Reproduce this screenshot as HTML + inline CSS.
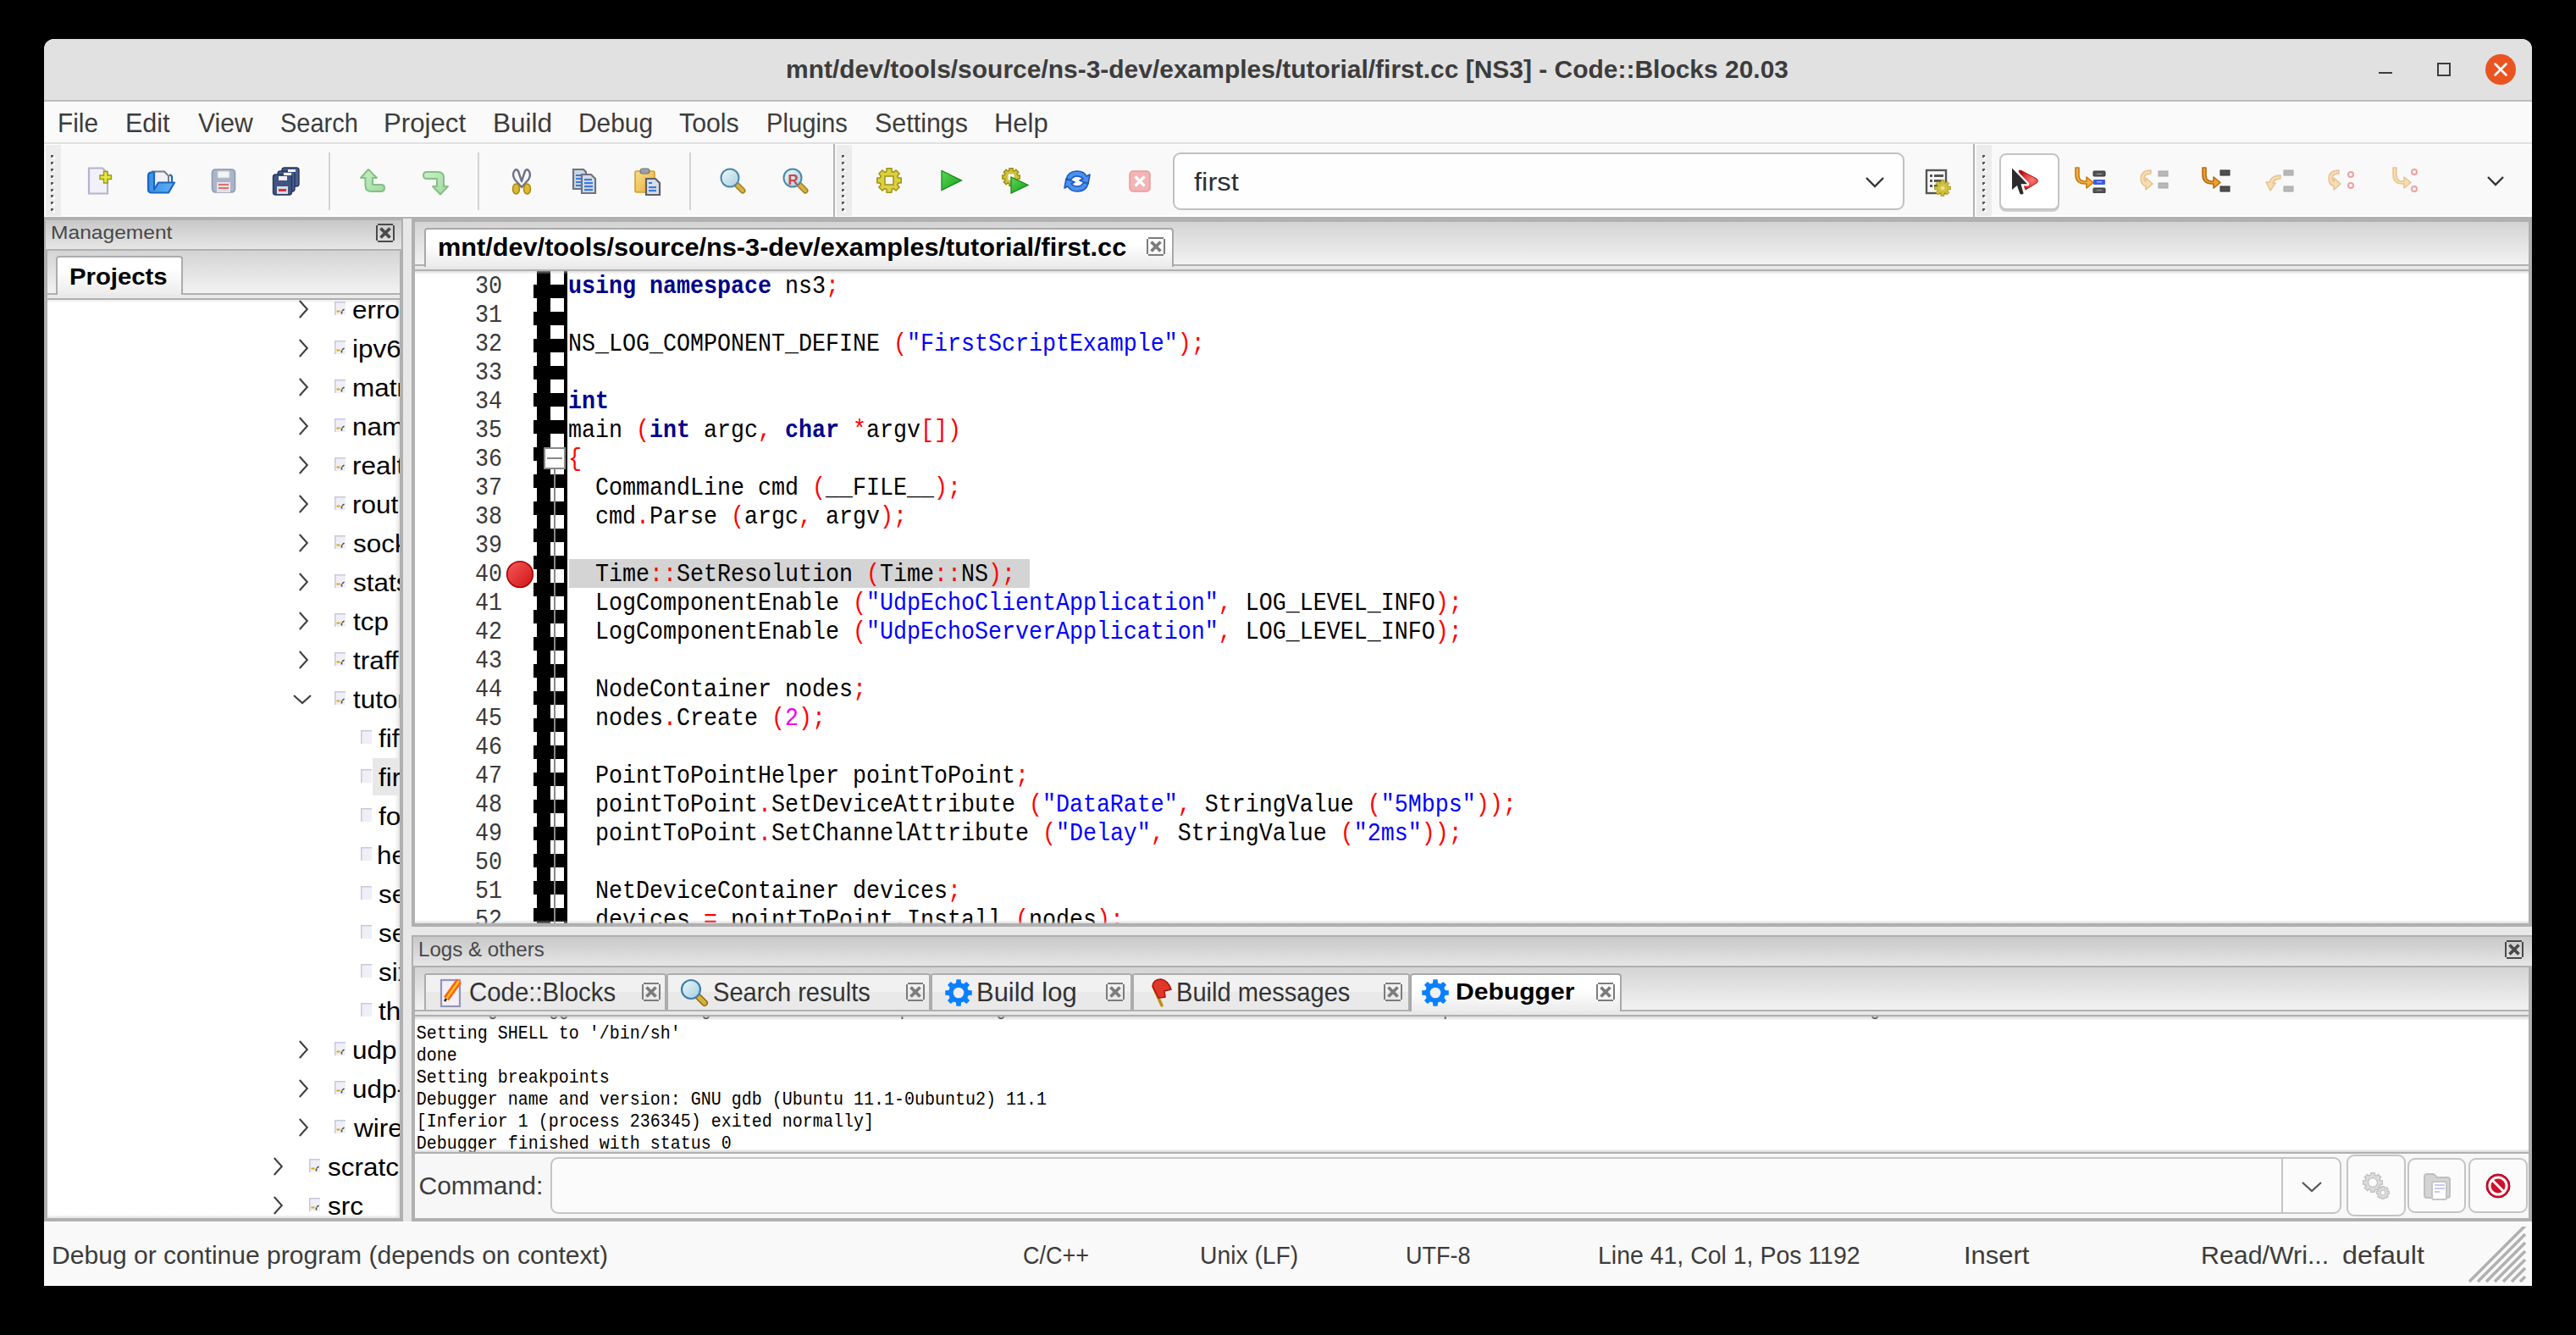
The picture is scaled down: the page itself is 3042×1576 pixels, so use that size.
<!DOCTYPE html>
<html><head><meta charset="utf-8"><title>Code::Blocks</title>
<style>
html,body{margin:0;padding:0;}
body{width:3042px;height:1576px;background:#000;position:relative;overflow:hidden;font-family:"Liberation Sans",sans-serif;}
.r{position:absolute;}
.t{position:absolute;white-space:pre;transform-origin:0 0;}
.m{position:absolute;white-space:pre;font-family:"Liberation Mono",monospace;font-size:26.66px;line-height:30.20px;color:#000;}
.ml{position:absolute;white-space:pre;font-family:"Liberation Mono",monospace;font-size:20px;line-height:22.66px;color:#000;}
.k{color:#00008b;font-weight:bold;} .s{color:#0000ff;} .o{color:#ff0000;} .n{color:#f000f0;}
</style></head><body>
<div class="r" style="left:52px;top:46px;width:2938px;height:1472px;background:#f9f9f9;border-radius:12px 12px 0 0;"></div>
<div class="r" style="left:52px;top:46px;width:2938px;height:72px;background:#e1e1e1;border-radius:12px 12px 0 0;"></div>
<div class="r" style="left:52px;top:118px;width:2938px;height:2px;background:#bdbdbd;"></div>
<div class="r" style="left:52px;top:120px;width:2938px;height:1px;background:#ffffff;"></div>
<div class="r" style="left:2809px;top:85px;width:16px;height:2px;background:#3c3c3c;"></div>
<div class="r" style="left:2878px;top:74px;width:16px;height:16px;border:2px solid #3c3c3c;box-sizing:border-box;"></div>
<svg class="r" style="left:2935px;top:64px" width="36" height="36" viewBox="0 0 36 36"><circle cx="18" cy="18" r="18" fill="#e95420"/><path d="M11.5 11.5L24.5 24.5M24.5 11.5L11.5 24.5" stroke="#fff" stroke-width="2.6" stroke-linecap="round"/></svg>
<div class="r" style="left:52px;top:121px;width:2938px;height:47px;background:#fafafa;"></div>
<div class="r" style="left:52px;top:168px;width:2938px;height:2px;background:#e0e0e0;"></div>
<div class="r" style="left:52px;top:170px;width:2938px;height:1px;background:#ffffff;"></div>
<div class="r" style="left:52px;top:171px;width:2938px;height:85px;background:#f9f9f9;"></div>
<div class="r" style="left:52px;top:254px;width:2938px;height:2px;background:#ffffff;"></div>
<div class="r" style="left:52px;top:256px;width:2938px;height:4px;background:#b0b0b0;"></div>
<div class="r" style="left:54px;top:171px;width:18px;height:84px;background:#ececec;"></div><div class="r" style="left:60.0px;top:183.0px;width:3.0px;height:3.0px;background:#5a5a5a;"></div><div class="r" style="left:62.0px;top:185.0px;width:2.5px;height:2.5px;background:#ffffff;"></div><div class="r" style="left:60.0px;top:190.9px;width:3.0px;height:3.0px;background:#5a5a5a;"></div><div class="r" style="left:62.0px;top:192.9px;width:2.5px;height:2.5px;background:#ffffff;"></div><div class="r" style="left:60.0px;top:198.8px;width:3.0px;height:3.0px;background:#5a5a5a;"></div><div class="r" style="left:62.0px;top:200.8px;width:2.5px;height:2.5px;background:#ffffff;"></div><div class="r" style="left:60.0px;top:206.7px;width:3.0px;height:3.0px;background:#5a5a5a;"></div><div class="r" style="left:62.0px;top:208.7px;width:2.5px;height:2.5px;background:#ffffff;"></div><div class="r" style="left:60.0px;top:214.6px;width:3.0px;height:3.0px;background:#5a5a5a;"></div><div class="r" style="left:62.0px;top:216.6px;width:2.5px;height:2.5px;background:#ffffff;"></div><div class="r" style="left:60.0px;top:222.5px;width:3.0px;height:3.0px;background:#5a5a5a;"></div><div class="r" style="left:62.0px;top:224.5px;width:2.5px;height:2.5px;background:#ffffff;"></div><div class="r" style="left:60.0px;top:230.4px;width:3.0px;height:3.0px;background:#5a5a5a;"></div><div class="r" style="left:62.0px;top:232.4px;width:2.5px;height:2.5px;background:#ffffff;"></div><div class="r" style="left:60.0px;top:238.3px;width:3.0px;height:3.0px;background:#5a5a5a;"></div><div class="r" style="left:62.0px;top:240.3px;width:2.5px;height:2.5px;background:#ffffff;"></div><div class="r" style="left:60.0px;top:246.2px;width:3.0px;height:3.0px;background:#5a5a5a;"></div><div class="r" style="left:62.0px;top:248.2px;width:2.5px;height:2.5px;background:#ffffff;"></div>
<div class="r" style="left:388px;top:180px;width:2px;height:68px;background:#d4d4d4;"></div>
<div class="r" style="left:564px;top:180px;width:2px;height:68px;background:#d4d4d4;"></div>
<div class="r" style="left:814px;top:180px;width:2px;height:68px;background:#d4d4d4;"></div>
<div class="r" style="left:984px;top:170px;width:2px;height:86px;background:#b4b4b4;"></div>
<div class="r" style="left:988px;top:171px;width:18px;height:84px;background:#ececec;"></div><div class="r" style="left:994.0px;top:183.0px;width:3.0px;height:3.0px;background:#5a5a5a;"></div><div class="r" style="left:996.0px;top:185.0px;width:2.5px;height:2.5px;background:#ffffff;"></div><div class="r" style="left:994.0px;top:190.9px;width:3.0px;height:3.0px;background:#5a5a5a;"></div><div class="r" style="left:996.0px;top:192.9px;width:2.5px;height:2.5px;background:#ffffff;"></div><div class="r" style="left:994.0px;top:198.8px;width:3.0px;height:3.0px;background:#5a5a5a;"></div><div class="r" style="left:996.0px;top:200.8px;width:2.5px;height:2.5px;background:#ffffff;"></div><div class="r" style="left:994.0px;top:206.7px;width:3.0px;height:3.0px;background:#5a5a5a;"></div><div class="r" style="left:996.0px;top:208.7px;width:2.5px;height:2.5px;background:#ffffff;"></div><div class="r" style="left:994.0px;top:214.6px;width:3.0px;height:3.0px;background:#5a5a5a;"></div><div class="r" style="left:996.0px;top:216.6px;width:2.5px;height:2.5px;background:#ffffff;"></div><div class="r" style="left:994.0px;top:222.5px;width:3.0px;height:3.0px;background:#5a5a5a;"></div><div class="r" style="left:996.0px;top:224.5px;width:2.5px;height:2.5px;background:#ffffff;"></div><div class="r" style="left:994.0px;top:230.4px;width:3.0px;height:3.0px;background:#5a5a5a;"></div><div class="r" style="left:996.0px;top:232.4px;width:2.5px;height:2.5px;background:#ffffff;"></div><div class="r" style="left:994.0px;top:238.3px;width:3.0px;height:3.0px;background:#5a5a5a;"></div><div class="r" style="left:996.0px;top:240.3px;width:2.5px;height:2.5px;background:#ffffff;"></div><div class="r" style="left:994.0px;top:246.2px;width:3.0px;height:3.0px;background:#5a5a5a;"></div><div class="r" style="left:996.0px;top:248.2px;width:2.5px;height:2.5px;background:#ffffff;"></div>
<div class="r" style="left:1385px;top:180px;width:864px;height:68px;background:#fefefe;border:2px solid #c0c0c0;border-radius:9px;box-sizing:border-box;"></div>
<svg class="r" style="left:2200px;top:204px" width="28" height="20" viewBox="0 0 28 20"><path d="M4 6L14 16L24 6" fill="none" stroke="#333" stroke-width="2.4"/></svg>
<div class="r" style="left:2330px;top:170px;width:2px;height:86px;background:#b4b4b4;"></div>
<div class="r" style="left:2334px;top:171px;width:18px;height:84px;background:#ececec;"></div><div class="r" style="left:2341.2px;top:183.0px;width:3.0px;height:3.0px;background:#5a5a5a;"></div><div class="r" style="left:2343.2px;top:185.0px;width:2.5px;height:2.5px;background:#ffffff;"></div><div class="r" style="left:2341.2px;top:190.9px;width:3.0px;height:3.0px;background:#5a5a5a;"></div><div class="r" style="left:2343.2px;top:192.9px;width:2.5px;height:2.5px;background:#ffffff;"></div><div class="r" style="left:2341.2px;top:198.8px;width:3.0px;height:3.0px;background:#5a5a5a;"></div><div class="r" style="left:2343.2px;top:200.8px;width:2.5px;height:2.5px;background:#ffffff;"></div><div class="r" style="left:2341.2px;top:206.7px;width:3.0px;height:3.0px;background:#5a5a5a;"></div><div class="r" style="left:2343.2px;top:208.7px;width:2.5px;height:2.5px;background:#ffffff;"></div><div class="r" style="left:2341.2px;top:214.6px;width:3.0px;height:3.0px;background:#5a5a5a;"></div><div class="r" style="left:2343.2px;top:216.6px;width:2.5px;height:2.5px;background:#ffffff;"></div><div class="r" style="left:2341.2px;top:222.5px;width:3.0px;height:3.0px;background:#5a5a5a;"></div><div class="r" style="left:2343.2px;top:224.5px;width:2.5px;height:2.5px;background:#ffffff;"></div><div class="r" style="left:2341.2px;top:230.4px;width:3.0px;height:3.0px;background:#5a5a5a;"></div><div class="r" style="left:2343.2px;top:232.4px;width:2.5px;height:2.5px;background:#ffffff;"></div><div class="r" style="left:2341.2px;top:238.3px;width:3.0px;height:3.0px;background:#5a5a5a;"></div><div class="r" style="left:2343.2px;top:240.3px;width:2.5px;height:2.5px;background:#ffffff;"></div><div class="r" style="left:2341.2px;top:246.2px;width:3.0px;height:3.0px;background:#5a5a5a;"></div><div class="r" style="left:2343.2px;top:248.2px;width:2.5px;height:2.5px;background:#ffffff;"></div>
<div class="r" style="left:2361px;top:181px;width:71px;height:67px;background:#fff;border:2px solid #c4c4c4;border-radius:8px;box-sizing:border-box;box-shadow:0 2px 0 #d0d0d0;"></div>
<svg class="r" style="left:2936px;top:207px" width="22" height="14" viewBox="0 0 22 14"><path d="M2 2L11 11L20 2" fill="none" stroke="#333" stroke-width="2.4"/></svg>
<div class="r" style="left:52px;top:256px;width:424px;height:1186px;background:#b0b0b0;"></div>
<div class="r" style="left:54px;top:260px;width:420px;height:34px;background:linear-gradient(#c8c8c8,#e6e6e6);"></div>
<div class="r" style="left:56px;top:296px;width:416px;height:50px;background:linear-gradient(#d4d4d4,#f2f2f2);"></div>
<div class="r" style="left:56px;top:348px;width:416px;height:4px;background:#e9e9e9;"></div>
<div class="r" style="left:66px;top:302px;width:150px;height:46px;background:linear-gradient(#ffffff 30%,#ececec);border:2px solid #acacac;border-bottom:none;border-radius:4px 4px 0 0;box-sizing:border-box;"></div>
<div class="r" style="left:56px;top:354px;width:416px;height:1084px;background:#fff;"></div>
<div class="r" style="left:56px;top:354px;width:416px;height:4px;background:linear-gradient(#ececec,#fff);"></div>
<div class="r" style="left:56px;top:1434px;width:416px;height:4px;background:linear-gradient(#fff,#e2e2e2);"></div>
<div class="r" style="left:466px;top:354px;width:6px;height:1084px;background:linear-gradient(90deg,rgba(255,255,255,0),#e4e4e4);"></div>
<svg class="r" style="left:444px;top:264px" width="22" height="22" viewBox="0 0 22 22"><g fill="#4a4a4a"><rect x="2" y="0" width="18" height="2"/><rect x="2" y="20" width="18" height="2"/><rect x="0" y="2" width="2" height="18"/><rect x="20" y="2" width="2" height="18"/></g><path d="M5.5 5.5L16.5 16.5M16.5 5.5L5.5 16.5" stroke="#4a4a4a" stroke-width="3.8"/></svg>
<div class="r" style="left:476px;top:258px;width:10px;height:1184px;background:#e8e8e8;"></div>
<div class="r" style="left:486px;top:260px;width:2504px;height:834px;background:#b0b0b0;"></div>
<div class="r" style="left:490px;top:262px;width:2496px;height:50px;background:linear-gradient(#d4d4d4,#f2f2f2);"></div>
<div class="r" style="left:490px;top:314px;width:2496px;height:4px;background:#e8e8e8;"></div>
<div class="r" style="left:501px;top:269px;width:885px;height:46px;background:linear-gradient(#ffffff 40%,#ebebeb);border:2px solid #a8a8a8;border-bottom:none;border-radius:4px 4px 0 0;box-sizing:border-box;"></div>
<svg class="r" style="left:1354px;top:280px" width="22" height="22" viewBox="0 0 22 22"><g fill="#7c7c7c"><rect x="2" y="0" width="18" height="2"/><rect x="2" y="20" width="18" height="2"/><rect x="0" y="2" width="2" height="18"/><rect x="20" y="2" width="2" height="18"/></g><path d="M5.5 5.5L16.5 16.5M16.5 5.5L5.5 16.5" stroke="#7c7c7c" stroke-width="3.8"/></svg>
<div class="r" style="left:490px;top:320px;width:2496px;height:770px;background:#fff;"></div>
<div class="r" style="left:490px;top:320px;width:2496px;height:770px;overflow:hidden;"><div class="r" style="left:-490px;top:-320px;"><div class="r" style="left:672px;top:660px;width:544px;height:34px;background:#d4d4d4;"></div>
<div class="r" style="left:630px;top:320px;width:40px;height:770px;background:linear-gradient(90deg,rgba(0,0,0,0) 0 4px,#000 4px 20px,rgba(0,0,0,0) 20px 36px,#000 36px 40px),repeating-linear-gradient(#fff 0 16px,#000 16px 32px);"></div>
<div class="r" style="left:654px;top:553px;width:2px;height:537px;background:#888;"></div>
<div class="r" style="left:642px;top:528px;width:26px;height:26px;background:#fff;border:2px solid #888;box-sizing:border-box;"></div>
<div class="r" style="left:646px;top:540px;width:18px;height:2px;background:#888;"></div>
<svg class="r" style="left:597px;top:661px" width="34" height="34" viewBox="0 0 34 34"><defs><linearGradient id="bp" x1="0" y1="0" x2="1" y2="1"><stop offset="0" stop-color="#f55a5a"/><stop offset="1" stop-color="#d01414"/></linearGradient></defs><circle cx="17" cy="17" r="15.3" fill="url(#bp)" stroke="#a80000" stroke-width="1.6"/></svg>
<div class="m" style="left:561.0px;top:323.51px;color:#3a3a3a;transform:scaleY(1.1);transform-origin:0 22.19px;">30</div>
<div class="m" style="left:671px;top:323.51px;transform:scaleY(1.1);transform-origin:0 22.19px;"><span class="k">using</span> <span class="k">namespace</span> ns3<span class="o">;</span></div>
<div class="m" style="left:561.0px;top:357.51px;color:#3a3a3a;transform:scaleY(1.1);transform-origin:0 22.19px;">31</div>
<div class="m" style="left:561.0px;top:391.51px;color:#3a3a3a;transform:scaleY(1.1);transform-origin:0 22.19px;">32</div>
<div class="m" style="left:671px;top:391.51px;transform:scaleY(1.1);transform-origin:0 22.19px;">NS_LOG_COMPONENT_DEFINE <span class="o">(</span><span class="s">&quot;FirstScriptExample&quot;</span><span class="o">)</span><span class="o">;</span></div>
<div class="m" style="left:561.0px;top:425.51px;color:#3a3a3a;transform:scaleY(1.1);transform-origin:0 22.19px;">33</div>
<div class="m" style="left:561.0px;top:459.51px;color:#3a3a3a;transform:scaleY(1.1);transform-origin:0 22.19px;">34</div>
<div class="m" style="left:671px;top:459.51px;transform:scaleY(1.1);transform-origin:0 22.19px;"><span class="k">int</span></div>
<div class="m" style="left:561.0px;top:493.51px;color:#3a3a3a;transform:scaleY(1.1);transform-origin:0 22.19px;">35</div>
<div class="m" style="left:671px;top:493.51px;transform:scaleY(1.1);transform-origin:0 22.19px;">main <span class="o">(</span><span class="k">int</span> argc<span class="o">,</span> <span class="k">char</span> <span class="o">*</span>argv<span class="o">[</span><span class="o">]</span><span class="o">)</span></div>
<div class="m" style="left:561.0px;top:527.51px;color:#3a3a3a;transform:scaleY(1.1);transform-origin:0 22.19px;">36</div>
<div class="m" style="left:671px;top:527.51px;transform:scaleY(1.1);transform-origin:0 22.19px;"><span class="o">{</span></div>
<div class="m" style="left:561.0px;top:561.51px;color:#3a3a3a;transform:scaleY(1.1);transform-origin:0 22.19px;">37</div>
<div class="m" style="left:671px;top:561.51px;transform:scaleY(1.1);transform-origin:0 22.19px;">  CommandLine cmd <span class="o">(</span>__FILE__<span class="o">)</span><span class="o">;</span></div>
<div class="m" style="left:561.0px;top:595.51px;color:#3a3a3a;transform:scaleY(1.1);transform-origin:0 22.19px;">38</div>
<div class="m" style="left:671px;top:595.51px;transform:scaleY(1.1);transform-origin:0 22.19px;">  cmd<span class="o">.</span>Parse <span class="o">(</span>argc<span class="o">,</span> argv<span class="o">)</span><span class="o">;</span></div>
<div class="m" style="left:561.0px;top:629.51px;color:#3a3a3a;transform:scaleY(1.1);transform-origin:0 22.19px;">39</div>
<div class="m" style="left:561.0px;top:663.51px;color:#3a3a3a;transform:scaleY(1.1);transform-origin:0 22.19px;">40</div>
<div class="m" style="left:671px;top:663.51px;transform:scaleY(1.1);transform-origin:0 22.19px;">  Time<span class="o">::</span>SetResolution <span class="o">(</span>Time<span class="o">::</span>NS<span class="o">)</span><span class="o">;</span></div>
<div class="m" style="left:561.0px;top:697.51px;color:#3a3a3a;transform:scaleY(1.1);transform-origin:0 22.19px;">41</div>
<div class="m" style="left:671px;top:697.51px;transform:scaleY(1.1);transform-origin:0 22.19px;">  LogComponentEnable <span class="o">(</span><span class="s">&quot;UdpEchoClientApplication&quot;</span><span class="o">,</span> LOG_LEVEL_INFO<span class="o">)</span><span class="o">;</span></div>
<div class="m" style="left:561.0px;top:731.51px;color:#3a3a3a;transform:scaleY(1.1);transform-origin:0 22.19px;">42</div>
<div class="m" style="left:671px;top:731.51px;transform:scaleY(1.1);transform-origin:0 22.19px;">  LogComponentEnable <span class="o">(</span><span class="s">&quot;UdpEchoServerApplication&quot;</span><span class="o">,</span> LOG_LEVEL_INFO<span class="o">)</span><span class="o">;</span></div>
<div class="m" style="left:561.0px;top:765.51px;color:#3a3a3a;transform:scaleY(1.1);transform-origin:0 22.19px;">43</div>
<div class="m" style="left:561.0px;top:799.51px;color:#3a3a3a;transform:scaleY(1.1);transform-origin:0 22.19px;">44</div>
<div class="m" style="left:671px;top:799.51px;transform:scaleY(1.1);transform-origin:0 22.19px;">  NodeContainer nodes<span class="o">;</span></div>
<div class="m" style="left:561.0px;top:833.51px;color:#3a3a3a;transform:scaleY(1.1);transform-origin:0 22.19px;">45</div>
<div class="m" style="left:671px;top:833.51px;transform:scaleY(1.1);transform-origin:0 22.19px;">  nodes<span class="o">.</span>Create <span class="o">(</span><span class="n">2</span><span class="o">)</span><span class="o">;</span></div>
<div class="m" style="left:561.0px;top:867.51px;color:#3a3a3a;transform:scaleY(1.1);transform-origin:0 22.19px;">46</div>
<div class="m" style="left:561.0px;top:901.51px;color:#3a3a3a;transform:scaleY(1.1);transform-origin:0 22.19px;">47</div>
<div class="m" style="left:671px;top:901.51px;transform:scaleY(1.1);transform-origin:0 22.19px;">  PointToPointHelper pointToPoint<span class="o">;</span></div>
<div class="m" style="left:561.0px;top:935.51px;color:#3a3a3a;transform:scaleY(1.1);transform-origin:0 22.19px;">48</div>
<div class="m" style="left:671px;top:935.51px;transform:scaleY(1.1);transform-origin:0 22.19px;">  pointToPoint<span class="o">.</span>SetDeviceAttribute <span class="o">(</span><span class="s">&quot;DataRate&quot;</span><span class="o">,</span> StringValue <span class="o">(</span><span class="s">&quot;5Mbps&quot;</span><span class="o">)</span><span class="o">)</span><span class="o">;</span></div>
<div class="m" style="left:561.0px;top:969.51px;color:#3a3a3a;transform:scaleY(1.1);transform-origin:0 22.19px;">49</div>
<div class="m" style="left:671px;top:969.51px;transform:scaleY(1.1);transform-origin:0 22.19px;">  pointToPoint<span class="o">.</span>SetChannelAttribute <span class="o">(</span><span class="s">&quot;Delay&quot;</span><span class="o">,</span> StringValue <span class="o">(</span><span class="s">&quot;2ms&quot;</span><span class="o">)</span><span class="o">)</span><span class="o">;</span></div>
<div class="m" style="left:561.0px;top:1003.51px;color:#3a3a3a;transform:scaleY(1.1);transform-origin:0 22.19px;">50</div>
<div class="m" style="left:561.0px;top:1037.51px;color:#3a3a3a;transform:scaleY(1.1);transform-origin:0 22.19px;">51</div>
<div class="m" style="left:671px;top:1037.51px;transform:scaleY(1.1);transform-origin:0 22.19px;">  NetDeviceContainer devices<span class="o">;</span></div>
<div class="m" style="left:561.0px;top:1071.51px;color:#3a3a3a;transform:scaleY(1.1);transform-origin:0 22.19px;">52</div>
<div class="m" style="left:671px;top:1071.51px;transform:scaleY(1.1);transform-origin:0 22.19px;">  devices <span class="o">=</span> pointToPoint<span class="o">.</span>Install <span class="o">(</span>nodes<span class="o">)</span><span class="o">;</span></div>
<div class="m" style="left:561.0px;top:1105.51px;color:#3a3a3a;transform:scaleY(1.1);transform-origin:0 22.19px;">53</div></div></div>
<div class="r" style="left:490px;top:320px;width:2496px;height:4px;background:linear-gradient(rgba(200,200,200,.6),rgba(255,255,255,0));"></div>
<div class="r" style="left:490px;top:1086px;width:2496px;height:4px;background:linear-gradient(rgba(255,255,255,0),rgba(200,200,200,.6));"></div>
<div class="r" style="left:486px;top:1094px;width:2504px;height:10px;background:#e8e8e8;"></div>
<div class="r" style="left:486px;top:1104px;width:2504px;height:338px;background:#b0b0b0;"></div>
<div class="r" style="left:488px;top:1106px;width:2502px;height:34px;background:linear-gradient(#c8c8c8,#e6e6e6);"></div>
<svg class="r" style="left:2958px;top:1110px" width="22" height="22" viewBox="0 0 22 22"><g fill="#4a4a4a"><rect x="2" y="0" width="18" height="2"/><rect x="2" y="20" width="18" height="2"/><rect x="0" y="2" width="2" height="18"/><rect x="20" y="2" width="2" height="18"/></g><path d="M5.5 5.5L16.5 16.5M16.5 5.5L5.5 16.5" stroke="#4a4a4a" stroke-width="3.8"/></svg>
<div class="r" style="left:490px;top:1142px;width:2496px;height:50px;background:linear-gradient(#d4d4d4,#f2f2f2);"></div>
<div class="r" style="left:490px;top:1194px;width:2496px;height:4px;background:#e8e8e8;"></div>
<div class="r" style="left:490px;top:1200px;width:2496px;height:160px;background:#fff;"></div>
<div class="r" style="left:490px;top:1200px;width:2496px;height:160px;overflow:hidden;"><div class="r" style="left:-490px;top:-1200px;"><div class="ml" style="left:491.8px;top:1181.55px;transform:scaleY(1.1);transform-origin:0 16.65px;">Starting debugger: /usr/bin/gdb -nx -fullname -quiet  -args /mnt/dev/tools/source/ns-3-dev/build/examples/tutorial/                        debug</div>
<div class="ml" style="left:491.8px;top:1209.55px;transform:scaleY(1.1);transform-origin:0 16.65px;">Setting SHELL to &#x27;/bin/sh&#x27;</div>
<div class="ml" style="left:491.8px;top:1235.55px;transform:scaleY(1.1);transform-origin:0 16.65px;">done</div>
<div class="ml" style="left:491.8px;top:1261.55px;transform:scaleY(1.1);transform-origin:0 16.65px;">Setting breakpoints</div>
<div class="ml" style="left:491.8px;top:1287.55px;transform:scaleY(1.1);transform-origin:0 16.65px;">Debugger name and version: GNU gdb (Ubuntu 11.1-0ubuntu2) 11.1</div>
<div class="ml" style="left:491.8px;top:1313.55px;transform:scaleY(1.1);transform-origin:0 16.65px;">[Inferior 1 (process 236345) exited normally]</div>
<div class="ml" style="left:491.8px;top:1339.55px;transform:scaleY(1.1);transform-origin:0 16.65px;">Debugger finished with status 0</div></div></div>
<div class="r" style="left:490px;top:1200px;width:2496px;height:5px;background:linear-gradient(rgba(200,200,200,.7),rgba(255,255,255,0));"></div>
<div class="r" style="left:490px;top:1356px;width:2496px;height:4px;background:linear-gradient(rgba(255,255,255,0),rgba(200,200,200,.7));"></div>
<div class="r" style="left:490px;top:1362px;width:2496px;height:76px;background:#f7f7f7;"></div>
<div class="r" style="left:501px;top:1149px;width:286px;height:43px;background:linear-gradient(#f1f1f1 0 48%,#e9e9e9 48%);border:2px solid #acacac;border-bottom:none;border-radius:3px 3px 0 0;box-sizing:border-box;"></div>
<div class="r" style="left:787px;top:1149px;width:312px;height:43px;background:linear-gradient(#f1f1f1 0 48%,#e9e9e9 48%);border:2px solid #acacac;border-bottom:none;border-radius:3px 3px 0 0;box-sizing:border-box;"></div>
<div class="r" style="left:1099px;top:1149px;width:238px;height:43px;background:linear-gradient(#f1f1f1 0 48%,#e9e9e9 48%);border:2px solid #acacac;border-bottom:none;border-radius:3px 3px 0 0;box-sizing:border-box;"></div>
<div class="r" style="left:1337px;top:1149px;width:328px;height:43px;background:linear-gradient(#f1f1f1 0 48%,#e9e9e9 48%);border:2px solid #acacac;border-bottom:none;border-radius:3px 3px 0 0;box-sizing:border-box;"></div>
<div class="r" style="left:1665px;top:1149px;width:250px;height:45px;background:linear-gradient(#ffffff 40%,#ebebeb);border:2px solid #a8a8a8;border-bottom:none;border-radius:4px 4px 0 0;box-sizing:border-box;"></div>
<svg class="r" style="left:758px;top:1160px" width="22" height="22" viewBox="0 0 22 22"><g fill="#7c7c7c"><rect x="2" y="0" width="18" height="2"/><rect x="2" y="20" width="18" height="2"/><rect x="0" y="2" width="2" height="18"/><rect x="20" y="2" width="2" height="18"/></g><path d="M5.5 5.5L16.5 16.5M16.5 5.5L5.5 16.5" stroke="#7c7c7c" stroke-width="3.8"/></svg>
<svg class="r" style="left:1070px;top:1160px" width="22" height="22" viewBox="0 0 22 22"><g fill="#7c7c7c"><rect x="2" y="0" width="18" height="2"/><rect x="2" y="20" width="18" height="2"/><rect x="0" y="2" width="2" height="18"/><rect x="20" y="2" width="2" height="18"/></g><path d="M5.5 5.5L16.5 16.5M16.5 5.5L5.5 16.5" stroke="#7c7c7c" stroke-width="3.8"/></svg>
<svg class="r" style="left:1306px;top:1160px" width="22" height="22" viewBox="0 0 22 22"><g fill="#7c7c7c"><rect x="2" y="0" width="18" height="2"/><rect x="2" y="20" width="18" height="2"/><rect x="0" y="2" width="2" height="18"/><rect x="20" y="2" width="2" height="18"/></g><path d="M5.5 5.5L16.5 16.5M16.5 5.5L5.5 16.5" stroke="#7c7c7c" stroke-width="3.8"/></svg>
<svg class="r" style="left:1634px;top:1160px" width="22" height="22" viewBox="0 0 22 22"><g fill="#7c7c7c"><rect x="2" y="0" width="18" height="2"/><rect x="2" y="20" width="18" height="2"/><rect x="0" y="2" width="2" height="18"/><rect x="20" y="2" width="2" height="18"/></g><path d="M5.5 5.5L16.5 16.5M16.5 5.5L5.5 16.5" stroke="#7c7c7c" stroke-width="3.8"/></svg>
<svg class="r" style="left:1885px;top:1160px" width="22" height="22" viewBox="0 0 22 22"><g fill="#7c7c7c"><rect x="2" y="0" width="18" height="2"/><rect x="2" y="20" width="18" height="2"/><rect x="0" y="2" width="2" height="18"/><rect x="20" y="2" width="2" height="18"/></g><path d="M5.5 5.5L16.5 16.5M16.5 5.5L5.5 16.5" stroke="#7c7c7c" stroke-width="3.8"/></svg>
<div class="r" style="left:650px;top:1366px;width:2115px;height:67px;background:#fbfbfb;border:2px solid #c4c4c4;border-radius:9px;box-sizing:border-box;"></div>
<div class="r" style="left:2694px;top:1367px;width:2px;height:65px;background:#c4c4c4;"></div>
<svg class="r" style="left:2716px;top:1392px" width="28" height="18" viewBox="0 0 28 18"><path d="M3 4L14 14L25 4" fill="none" stroke="#555" stroke-width="2.2"/></svg>
<div class="r" style="left:2771px;top:1363px;width:70px;height:73px;background:#fbfbfb;border:2px solid #c4c4c4;border-radius:9px;box-sizing:border-box;"></div>
<div class="r" style="left:2843px;top:1367px;width:69px;height:65px;background:#fbfbfb;border:2px solid #c4c4c4;border-radius:9px;box-sizing:border-box;"></div>
<div class="r" style="left:2915px;top:1367px;width:70px;height:65px;background:#fbfbfb;border:2px solid #c4c4c4;border-radius:9px;box-sizing:border-box;"></div>
<svg class="r" style="left:2934px;top:1384px" width="32" height="32" viewBox="0 0 32 32"><circle cx="16" cy="16" r="14" fill="#d0102a" stroke="#b00020" stroke-width="1"/><circle cx="16" cy="16" r="10" fill="none" stroke="#fff" stroke-width="3"/><path d="M9 9L23 23" stroke="#fff" stroke-width="3"/></svg>
<div class="r" style="left:52px;top:1442px;width:2938px;height:2px;background:#ffffff;"></div>
<div class="r" style="left:52px;top:1444px;width:2938px;height:74px;background:#f9f9f9;"></div>
<svg class="r" style="left:2915px;top:1448px" width="70" height="68" viewBox="0 0 70 68"><path d="M1 65L67 -1" stroke="#b0b0b0" stroke-width="3.6"/><path d="M11 65L67 9" stroke="#b0b0b0" stroke-width="3.6"/><path d="M21 65L67 19" stroke="#b0b0b0" stroke-width="3.6"/><path d="M31 65L67 29" stroke="#b0b0b0" stroke-width="3.6"/><path d="M41 65L67 39" stroke="#b0b0b0" stroke-width="3.6"/><path d="M51 65L67 49" stroke="#b0b0b0" stroke-width="3.6"/><path d="M61 65L67 59" stroke="#b0b0b0" stroke-width="3.6"/></svg>
<svg class="r" style="left:100px;top:195px" width="36" height="38" viewBox="0 0 36 38"><path d="M5 3.5H21L27 9.5V33.5H5Z" fill="#f1f1f9" stroke="#b6b2cf" stroke-width="2.2"/><path d="M22.5 7.5h4.5v4.5h4.5v4.5h-4.5v4.5h-4.5v-4.5h-4.5v-4.5h4.5z" fill="#e6e640" stroke="#9a9a10" stroke-width="1.4"/></svg>
<svg class="r" style="left:170px;top:198px" width="40" height="34" viewBox="0 0 40 34"><path d="M10 4.5H24L29 9.5V24H10Z" fill="#f0f0f6" stroke="#7a7a80" stroke-width="2"/><defs><linearGradient id="fo" x1="0" y1="0" x2="1" y2="0"><stop offset="0" stop-color="#3a8ee6"/><stop offset="1" stop-color="#62b0f6"/></linearGradient></defs><path d="M5 9.5Q5 5.5 9 5.5H12V26L17 17.5H36L29 29.5H9Q5 29.5 5 25.5Z" fill="url(#fo)" stroke="#1a66c0" stroke-width="2.2" stroke-linejoin="round"/><path d="M30 8.5Q33 8.5 33 11.5V17" fill="none" stroke="#1a66c0" stroke-width="2.2"/></svg>
<svg class="r" style="left:248px;top:197px" width="32" height="33" viewBox="0 0 32 33"><rect x="2.5" y="3" width="27" height="27" rx="4" fill="#a9b5c9" stroke="#8d99ae" stroke-width="1.6"/><rect x="9" y="5" width="14" height="8" fill="#f4f4f4" stroke="#c0c8d4" stroke-width="1"/><rect x="8" y="18" width="16" height="12" fill="#dfe3ea"/><rect x="10" y="20" width="12" height="2" fill="#e86a6a"/><rect x="10" y="24" width="12" height="2" fill="#e86a6a"/></svg>
<svg class="r" style="left:320px;top:195px" width="36" height="38" viewBox="0 0 36 38"><g stroke="#26365e" stroke-width="1.4"><rect x="13" y="3" width="20" height="22" rx="3" fill="#4a5e8c"/><rect x="8" y="7" width="20" height="24" rx="3" fill="#4a5e8c"/><rect x="2.5" y="11" width="22" height="24" rx="3" fill="#405484"/></g><rect x="20" y="5" width="9" height="3" fill="#f0f0f0"/><rect x="15" y="9" width="9" height="3" fill="#f0f0f0"/><rect x="9" y="13" width="10" height="5" fill="#f0f0f0"/><rect x="7" y="25" width="13" height="9" fill="#d8dce6"/><rect x="9" y="28" width="9" height="3" fill="#e03030"/></svg>
<svg class="r" style="left:422px;top:196px" width="36" height="34" viewBox="0 0 36 34"><defs><linearGradient id="ug" x1="0" y1="0" x2="1" y2="1"><stop offset="0" stop-color="#c8f0c8"/><stop offset="1" stop-color="#a2d8a2"/></linearGradient></defs><path d="M13 4L4 14H9.5V23Q9.5 30 16.5 30H28Q32 30 32 26Q32 22 28 22H18V14H23Z" fill="url(#ug)" stroke="#84c084" stroke-width="2" stroke-linejoin="round"/></svg>
<svg class="r" style="left:496px;top:198px" width="36" height="34" viewBox="0 0 36 34"><path d="M8 5Q4 5 4 9Q4 13 8 13H20V22H15L24 31.5L33 22H28V12Q28 5 21 5Z" fill="url(#ug)" stroke="#84c084" stroke-width="2" stroke-linejoin="round"/></svg>
<svg class="r" style="left:600px;top:196px" width="32" height="36" viewBox="0 0 32 36"><path d="M8 5Q4 10 8 16L16 25L24 16Q28 10 24 5Q22 3 20 6L16 18L12 6Q10 3 8 5Z" fill="none" stroke="#6e7288" stroke-width="2.4" stroke-linejoin="round"/><ellipse cx="9.5" cy="27" rx="4" ry="6" fill="#e0b830" stroke="#a88a10" stroke-width="1.5"/><ellipse cx="22.5" cy="27" rx="4" ry="6" fill="#e0b830" stroke="#a88a10" stroke-width="1.5"/></svg>
<svg class="r" style="left:672px;top:197px" width="36" height="34" viewBox="0 0 36 34"><path d="M5 3H17L20 6V26H5Z" fill="#cfd6e0" stroke="#6e7480" stroke-width="2.2"/><path d="M15 9H26L31 14V31H15Z" fill="#d6dce6" stroke="#6e7480" stroke-width="2.2"/><g fill="#3a7ad8"><rect x="8" y="9" width="6" height="2"/><rect x="8" y="13" width="6" height="2"/><rect x="8" y="17" width="6" height="2"/><rect x="8" y="21" width="6" height="2"/><rect x="18" y="14" width="9" height="2.2"/><rect x="18" y="18" width="10" height="2.2"/><rect x="18" y="22" width="10" height="2.2"/><rect x="18" y="26" width="10" height="2.2"/></g></svg>
<svg class="r" style="left:746px;top:197px" width="38" height="36" viewBox="0 0 38 36"><defs><linearGradient id="pa" x1="0" y1="0" x2="1" y2="1"><stop offset="0" stop-color="#f8dc90"/><stop offset="1" stop-color="#e8b030"/></linearGradient></defs><rect x="4" y="5" width="23" height="25" rx="2" fill="url(#pa)" stroke="#d0a030" stroke-width="1.6"/><rect x="10" y="2" width="11" height="6" rx="3" fill="#9aa0a8" stroke="#70767e" stroke-width="1.2"/><path d="M17 14H28L33 19V33H17Z" fill="#d8dee8" stroke="#5c6068" stroke-width="2.2"/><g fill="#3a7ad8"><rect x="20" y="18" width="4" height="2"/><rect x="20" y="23" width="9" height="2.2"/><rect x="20" y="27" width="9" height="2.2"/></g></svg>
<svg class="r" style="left:850px;top:198px" width="32" height="32" viewBox="0 0 32 32"><defs><linearGradient id="mg850" x1="0" y1="0" x2="1" y2="1"><stop offset="0" stop-color="#f0f8fc"/><stop offset="1" stop-color="#a6cedf"/></linearGradient></defs><path d="M20 20L27 27" stroke="#a08020" stroke-width="7" stroke-linecap="round"/><path d="M20 20L27 27" stroke="#d8b040" stroke-width="4" stroke-linecap="round"/><circle cx="12" cy="12" r="10.5" fill="url(#mg850)" stroke="#4c88a8" stroke-width="2"/></svg>
<svg class="r" style="left:924px;top:198px" width="32" height="32" viewBox="0 0 32 32"><defs><linearGradient id="mg924" x1="0" y1="0" x2="1" y2="1"><stop offset="0" stop-color="#f0f8fc"/><stop offset="1" stop-color="#a6cedf"/></linearGradient></defs><path d="M20 20L27 27" stroke="#a08020" stroke-width="7" stroke-linecap="round"/><path d="M20 20L27 27" stroke="#d8b040" stroke-width="4" stroke-linecap="round"/><circle cx="12" cy="12" r="10.5" fill="url(#mg924)" stroke="#4c88a8" stroke-width="2"/><text x="6.5" y="19.5" font-family="Liberation Sans" font-weight="bold" font-size="17" fill="#c84848">R</text></svg>
<svg class="r" style="left:1034px;top:197px" width="32" height="32" viewBox="0 0 32 32"><path d="M12.85 5.46 L13.17 1.78 L18.83 1.78 L19.15 5.46 L21.22 6.32 L24.06 3.94 L28.06 7.94 L25.68 10.78 L26.54 12.85 L30.22 13.17 L30.22 18.83 L26.54 19.15 L25.68 21.22 L28.06 24.06 L24.06 28.06 L21.22 25.68 L19.15 26.54 L18.83 30.22 L13.17 30.22 L12.85 26.54 L10.78 25.68 L7.94 28.06 L3.94 24.06 L6.32 21.22 L5.46 19.15 L1.78 18.83 L1.78 13.17 L5.46 12.85 L6.32 10.78 L3.94 7.94 L7.94 3.94 L10.78 6.32Z" fill="#dcd040" stroke="#a09010" stroke-width="1.5"/><rect x="11" y="11" width="10" height="10" fill="#f8f8f8" stroke="#a09010" stroke-width="1.5"/></svg>
<svg class="r" style="left:1108px;top:198px" width="32" height="30" viewBox="0 0 32 30"><defs><linearGradient id="rg" x1="0" y1="0" x2="1" y2="1"><stop offset="0" stop-color="#5ad85a"/><stop offset="1" stop-color="#16a016"/></linearGradient></defs><path d="M4 3.5L27.5 15L4 26.5Z" fill="url(#rg)" stroke="#108010" stroke-width="1.2"/></svg>
<svg class="r" style="left:1180px;top:195px" width="38" height="36" viewBox="0 0 38 36"><path d="M11.71 6.34 L11.95 3.70 L16.05 3.70 L16.29 6.34 L17.80 6.96 L19.83 5.27 L22.73 8.17 L21.04 10.20 L21.66 11.71 L24.30 11.95 L24.30 16.05 L21.66 16.29 L21.04 17.80 L22.73 19.83 L19.83 22.73 L17.80 21.04 L16.29 21.66 L16.05 24.30 L11.95 24.30 L11.71 21.66 L10.20 21.04 L8.17 22.73 L5.27 19.83 L6.96 17.80 L6.34 16.29 L3.70 16.05 L3.70 11.95 L6.34 11.71 L6.96 10.20 L5.27 8.17 L8.17 5.27 L10.20 6.96Z" fill="#cfc040" stroke="#9a8a10" stroke-width="1.4"/><rect x="10.5" y="10.5" width="7" height="7" fill="#f8f8f8"/><path d="M14 14L34 23.5L14 33Z" fill="url(#rg)" stroke="#108010" stroke-width="1.2"/></svg>
<svg class="r" style="left:1255px;top:199px" width="34" height="30" viewBox="0 0 34 30"><g fill="#4a90ee" stroke="#1a58c0" stroke-width="1.6" stroke-linejoin="round"><path d="M4 13Q6 3 17 3Q25 3 28 9L32 7L30 18L20 14L24 12Q21 9 17 9Q12 9 10 13Z"/><path d="M30 17Q28 27 17 27Q9 27 6 21L2 23L4 12L14 16L10 18Q13 21 17 21Q22 21 24 17Z"/></g></svg>
<svg class="r" style="left:1332px;top:200px" width="28" height="28" viewBox="0 0 28 28"><rect x="2" y="2" width="24" height="24" rx="4" fill="#f2b4b4" stroke="#e89a9a" stroke-width="1.5"/><path d="M8.5 8.5L19.5 19.5M19.5 8.5L8.5 19.5" stroke="#fff" stroke-width="3.2"/></svg>
<svg class="r" style="left:2272px;top:198px" width="36" height="34" viewBox="0 0 36 34"><rect x="3" y="3" width="23" height="27" fill="#fafafa" stroke="#555" stroke-width="2.4"/><g fill="#555"><rect x="7" y="8" width="3" height="3"/><rect x="12" y="8" width="11" height="3"/><rect x="7" y="14" width="3" height="3"/><rect x="12" y="14" width="11" height="3"/><rect x="7" y="20" width="3" height="3"/><rect x="12" y="20" width="6" height="3"/></g><path d="M20.14 17.77 L20.15 14.68 L23.85 14.68 L23.86 17.77 L25.09 18.28 L27.28 16.10 L29.90 18.72 L27.72 20.91 L28.23 22.14 L31.32 22.15 L31.32 25.85 L28.23 25.86 L27.72 27.09 L29.90 29.28 L27.28 31.90 L25.09 29.72 L23.86 30.23 L23.85 33.32 L20.15 33.32 L20.14 30.23 L18.91 29.72 L16.72 31.90 L14.10 29.28 L16.28 27.09 L15.77 25.86 L12.68 25.85 L12.68 22.15 L15.77 22.14 L16.28 20.91 L14.10 18.72 L16.72 16.10 L18.91 18.28Z" fill="#cfc040" stroke="#a89810" stroke-width="1"/><circle cx="22" cy="24" r="2.5" fill="#e8e080"/></svg>
<svg class="r" style="left:2366px;top:190px" width="50" height="46" viewBox="0 0 50 46"><defs><radialGradient id="dg" cx="0.7" cy="0.5" r="0.65"><stop offset="0" stop-color="#ff7676"/><stop offset="0.65" stop-color="#e23a3a"/><stop offset="1" stop-color="#b80c0c"/></radialGradient></defs><path d="M18 11.5Q19 10.5 21 11.5L39 21Q42 23.5 39 26L26 34Z" fill="url(#dg)" stroke="#b01010" stroke-width="1" stroke-linejoin="round"/><path d="M10 8.5V34L16 29L19.2 38.6Q21.5 40.5 23.6 38.4L20.5 27.3H28.1Z" fill="#fff" stroke="#fff" stroke-width="4.4" stroke-linejoin="round"/><path d="M10 8.5V34L16 29L19.2 38.6Q21.5 40.5 23.6 38.4L20.5 27.3H28.1Z" fill="#2c2c2c"/></svg>
<svg class="r" style="left:2450px;top:196px" width="40" height="32" viewBox="0 0 40 32"><path d="M5 2V11Q5 18 12 18H14V13L22 19.5L14 26V21H12Q1 21 1 10V2Z" fill="#f4b040" stroke="#c87a10" stroke-width="1.6" stroke-linejoin="round"/><rect x="22" y="6" width="14" height="6" rx="1" fill="#555" stroke="#333" stroke-width="1"/><rect x="26" y="9" width="6" height="1" fill="#999"/><rect x="22" y="16" width="14" height="6" rx="1" fill="#3c5ce0"/><rect x="26" y="18" width="6" height="1.5" fill="#a0b0ff"/><rect x="22" y="26" width="14" height="6" rx="1" fill="#555" stroke="#333" stroke-width="1"/><rect x="26" y="28" width="6" height="1" fill="#999"/></svg>
<svg class="r" style="left:2526px;top:199px" width="40" height="30" viewBox="0 0 40 30"><path d="M14 2Q2 2 2 12Q2 19 8 21V25L16 18L8 11V15Q6 14 6 12Q6 6 14 6Z" fill="#f8dcb0" stroke="#e8c090" stroke-width="1.4" stroke-linejoin="round"/><rect x="23" y="3" width="11" height="6" fill="#b8b8b8" stroke="#a8a8a8"/><rect x="23" y="17" width="11" height="6" fill="#b8b8b8" stroke="#a8a8a8"/></svg>
<svg class="r" style="left:2600px;top:196px" width="36" height="32" viewBox="0 0 36 32"><path d="M4 2V11Q4 18 11 18H13V13L21 19.5L13 26V21H11Q0 21 0 10V2Z" transform="translate(1 0)" fill="#f0a030" stroke="#b86a10" stroke-width="1.6" stroke-linejoin="round"/><rect x="22" y="5" width="11" height="6" fill="#505050" stroke="#333"/><rect x="22" y="24" width="11" height="6" fill="#505050" stroke="#333"/></svg>
<svg class="r" style="left:2673px;top:198px" width="38" height="32" viewBox="0 0 38 32"><path d="M20 9Q9 9 7 17H3L8 27L14 18H11Q13 13 20 13Z" fill="#f8dcb0" stroke="#e8c090" stroke-width="1.4" stroke-linejoin="round"/><rect x="24" y="3" width="11" height="6" fill="#b8b8b8" stroke="#a8a8a8"/><rect x="24" y="22" width="11" height="6" fill="#b8b8b8" stroke="#a8a8a8"/></svg>
<svg class="r" style="left:2748px;top:199px" width="34" height="30" viewBox="0 0 34 30"><path d="M14 2Q2 2 2 12Q2 19 8 21V25L16 18L8 11V15Q6 14 6 12Q6 6 14 6Z" fill="#f8dcb0" stroke="#e8c090" stroke-width="1.4" stroke-linejoin="round"/><circle cx="28" cy="7" r="3" fill="none" stroke="#f0a0a0" stroke-width="2"/><circle cx="28" cy="20" r="3" fill="none" stroke="#f0a0a0" stroke-width="2"/></svg>
<svg class="r" style="left:2825px;top:196px" width="32" height="34" viewBox="0 0 32 34"><path d="M4 2V11Q4 18 11 18H13V13L21 19.5L13 26V21H11Q0 21 0 10V2Z" transform="translate(1 0)" fill="#f8dcb0" stroke="#e8c090" stroke-width="1.4" stroke-linejoin="round"/><circle cx="26" cy="7" r="3" fill="none" stroke="#f0a0a0" stroke-width="2"/><circle cx="26" cy="27" r="3" fill="none" stroke="#f0a0a0" stroke-width="2"/></svg>
<svg class="r" style="left:518px;top:1154px" width="30" height="36" viewBox="0 0 30 36"><rect x="3" y="3" width="22" height="31" fill="#f0f0f6" stroke="#9494b8" stroke-width="2.2"/><path d="M9 25L24 4" stroke="#ff6010" stroke-width="7.5" stroke-linecap="butt"/><path d="M9 25L24 4" stroke="#ffc020" stroke-width="2.5"/><path d="M7 28L9 25" stroke="#222" stroke-width="2.5"/></svg>
<svg class="r" style="left:802px;top:1154px" width="36" height="36" viewBox="0 0 36 36"><defs><linearGradient id="sr" x1="0" y1="0" x2="1" y2="1"><stop offset="0" stop-color="#eef8fc"/><stop offset="1" stop-color="#a2cce0"/></linearGradient></defs><path d="M23 23L30 30" stroke="#8a6a10" stroke-width="8" stroke-linecap="round"/><path d="M23 23L30 30" stroke="#d8b038" stroke-width="5" stroke-linecap="round"/><circle cx="14" cy="14" r="11" fill="url(#sr)" stroke="#3c80a8" stroke-width="2.2"/></svg>
<svg class="r" style="left:1115px;top:1155px" width="34" height="34" viewBox="0 0 34 34"><path d="M13.92 5.40 L14.37 1.22 L19.63 1.22 L20.08 5.40 L23.03 6.62 L26.30 3.98 L30.02 7.70 L27.38 10.97 L28.60 13.92 L32.78 14.37 L32.78 19.63 L28.60 20.08 L27.38 23.03 L30.02 26.30 L26.30 30.02 L23.03 27.38 L20.08 28.60 L19.63 32.78 L14.37 32.78 L13.92 28.60 L10.97 27.38 L7.70 30.02 L3.98 26.30 L6.62 23.03 L5.40 20.08 L1.22 19.63 L1.22 14.37 L5.40 13.92 L6.62 10.97 L3.98 7.70 L7.70 3.98 L10.97 6.62Z" fill="#0a80ff"/><circle cx="17" cy="17" r="6.3" fill="#f0f0f0"/></svg>
<svg class="r" style="left:1678px;top:1155px" width="34" height="34" viewBox="0 0 34 34"><path d="M13.92 5.40 L14.37 1.22 L19.63 1.22 L20.08 5.40 L23.03 6.62 L26.30 3.98 L30.02 7.70 L27.38 10.97 L28.60 13.92 L32.78 14.37 L32.78 19.63 L28.60 20.08 L27.38 23.03 L30.02 26.30 L26.30 30.02 L23.03 27.38 L20.08 28.60 L19.63 32.78 L14.37 32.78 L13.92 28.60 L10.97 27.38 L7.70 30.02 L3.98 26.30 L6.62 23.03 L5.40 20.08 L1.22 19.63 L1.22 14.37 L5.40 13.92 L6.62 10.97 L3.98 7.70 L7.70 3.98 L10.97 6.62Z" fill="#0a80ff"/><circle cx="17" cy="17" r="6.3" fill="#f0f0f0"/></svg>
<svg class="r" style="left:1354px;top:1154px" width="32" height="36" viewBox="0 0 32 36"><path d="M8 11L18 33" stroke="#c09010" stroke-width="3.5" stroke-linecap="round"/><path d="M7 10Q8 2 17 2Q25 3 29 14L21 16L22 23Q16 24 14 24Z" fill="#e03828" stroke="#b01010" stroke-width="1.6" stroke-linejoin="round"/></svg>
<svg class="r" style="left:2786px;top:1380px" width="40" height="40" viewBox="0 0 40 40"><path d="M13.42 7.38 L13.76 4.72 L18.24 4.72 L18.58 7.38 L20.27 8.08 L22.39 6.44 L25.56 9.61 L23.92 11.73 L24.62 13.42 L27.28 13.76 L27.28 18.24 L24.62 18.58 L23.92 20.27 L25.56 22.39 L22.39 25.56 L20.27 23.92 L18.58 24.62 L18.24 27.28 L13.76 27.28 L13.42 24.62 L11.73 23.92 L9.61 25.56 L6.44 22.39 L8.08 20.27 L7.38 18.58 L4.72 18.24 L4.72 13.76 L7.38 13.42 L8.08 11.73 L6.44 9.61 L9.61 6.44 L11.73 8.08Z" fill="#dcdcdc" stroke="#c4c4c4" stroke-width="1.6"/><circle cx="16" cy="16" r="5.5" fill="#fbfbfb" stroke="#c8c8c8" stroke-width="1.5"/><path d="M26.28 22.25 L26.54 20.64 L29.46 20.64 L29.72 22.25 L30.85 22.72 L32.17 21.76 L34.24 23.83 L33.28 25.15 L33.75 26.28 L35.36 26.54 L35.36 29.46 L33.75 29.72 L33.28 30.85 L34.24 32.17 L32.17 34.24 L30.85 33.28 L29.72 33.75 L29.46 35.36 L26.54 35.36 L26.28 33.75 L25.15 33.28 L23.83 34.24 L21.76 32.17 L22.72 30.85 L22.25 29.72 L20.64 29.46 L20.64 26.54 L22.25 26.28 L22.72 25.15 L21.76 23.83 L23.83 21.76 L25.15 22.72Z" fill="#dcdcdc" stroke="#c4c4c4" stroke-width="1.4"/><circle cx="28" cy="28" r="2.8" fill="#fbfbfb" stroke="#c8c8c8" stroke-width="1.2"/></svg>
<svg class="r" style="left:2860px;top:1383px" width="36" height="36" viewBox="0 0 36 36"><path d="M3 6Q3 3 6 3H14L18 7H30Q33 7 33 10V28Q33 31 30 31H6Q3 31 3 28Z" fill="#d4d4d4" stroke="#c0c0c0" stroke-width="2"/><rect x="12" y="12" width="17" height="21" rx="2" fill="#fff" stroke="#c4c4c4" stroke-width="2"/><g fill="#c8c8f0"><rect x="15" y="15" width="12" height="2"/><rect x="15" y="19" width="12" height="2"/><rect x="15" y="23" width="6" height="2"/></g></svg>
<div class="t" style="left:927.82px;top:65.17px;font-size:30.3px;line-height:33.85px;color:#3c3c3c;font-weight:bold;transform:scaleX(0.9891);">mnt/dev/tools/source/ns-3-dev/examples/tutorial/first.cc [NS3] - Code::Blocks 20.03</div>
<div class="t" style="left:68.16px;top:129.31px;font-size:30.7px;line-height:34.30px;color:#3c3c3c;transform:scaleX(0.9702);">File</div>
<div class="t" style="left:148.01px;top:129.31px;font-size:30.7px;line-height:34.30px;color:#3c3c3c;transform:scaleX(0.9931);">Edit</div>
<div class="t" style="left:234.40px;top:129.31px;font-size:30.7px;line-height:34.30px;color:#3c3c3c;transform:scaleX(0.9806);">View</div>
<div class="t" style="left:331.46px;top:129.31px;font-size:30.7px;line-height:34.30px;color:#3c3c3c;transform:scaleX(0.9436);">Search</div>
<div class="t" style="left:453.07px;top:129.31px;font-size:30.7px;line-height:34.30px;color:#3c3c3c;transform:scaleX(1.0172);">Project</div>
<div class="t" style="left:581.64px;top:129.31px;font-size:30.7px;line-height:34.30px;color:#3c3c3c;transform:scaleX(1.0281);">Build</div>
<div class="t" style="left:682.65px;top:129.31px;font-size:30.7px;line-height:34.30px;color:#3c3c3c;transform:scaleX(0.9730);">Debug</div>
<div class="t" style="left:802.00px;top:129.31px;font-size:30.7px;line-height:34.30px;color:#3c3c3c;transform:scaleX(0.9875);">Tools</div>
<div class="t" style="left:904.50px;top:129.31px;font-size:30.7px;line-height:34.30px;color:#3c3c3c;transform:scaleX(0.9521);">Plugins</div>
<div class="t" style="left:1033.01px;top:129.31px;font-size:30.7px;line-height:34.30px;color:#3c3c3c;transform:scaleX(0.9923);">Settings</div>
<div class="t" style="left:1173.68px;top:129.31px;font-size:30.7px;line-height:34.30px;color:#3c3c3c;transform:scaleX(1.0092);">Help</div>
<div class="t" style="left:1409.70px;top:198.24px;font-size:30px;line-height:33.52px;color:#2e2e2e;transform:scaleX(1.0921);">first</div>
<div class="t" style="left:59.90px;top:261.82px;font-size:22.4px;line-height:25.02px;color:#484848;transform:scaleX(1.0976);">Management</div>
<div class="t" style="left:82.34px;top:311.91px;font-size:27.6px;line-height:30.83px;color:#000;font-weight:bold;transform:scaleX(1.0619);">Projects</div>
<div class="t" style="left:494.27px;top:1107.63px;font-size:23.5px;line-height:26.25px;color:#484848;transform:scaleX(1.0268);">Logs &amp; others</div>
<div class="t" style="left:516.86px;top:276.18px;font-size:29.4px;line-height:32.85px;color:#000;font-weight:bold;transform:scaleX(1.0438);">mnt/dev/tools/source/ns-3-dev/examples/tutorial/first.cc</div>
<div class="t" style="left:553.84px;top:1153.59px;font-size:30.5px;line-height:34.07px;color:#333;transform:scaleX(0.9633);">Code::Blocks</div>
<div class="t" style="left:842.05px;top:1153.59px;font-size:30.5px;line-height:34.07px;color:#333;transform:scaleX(0.9531);">Search results</div>
<div class="t" style="left:1152.97px;top:1153.59px;font-size:30.5px;line-height:34.07px;color:#333;transform:scaleX(1.0139);">Build log</div>
<div class="t" style="left:1389.49px;top:1153.59px;font-size:30.5px;line-height:34.07px;color:#333;transform:scaleX(0.9538);">Build messages</div>
<div class="t" style="left:1718.94px;top:1155.40px;font-size:28.5px;line-height:31.84px;color:#000;font-weight:bold;transform:scaleX(1.0552);">Debugger</div>
<div class="t" style="left:494.50px;top:1382.84px;font-size:30px;line-height:33.52px;color:#3c3c3c;">Command:</div>
<div class="t" style="left:61.30px;top:1464.64px;font-size:30px;line-height:33.52px;color:#3c3c3c;transform:scaleX(1.0023);">Debug or continue program (depends on context)</div>
<div class="t" style="left:1208.10px;top:1464.64px;font-size:30px;line-height:33.52px;color:#3c3c3c;transform:scaleX(0.9004);">C/C++</div>
<div class="t" style="left:1417.12px;top:1464.64px;font-size:30px;line-height:33.52px;color:#3c3c3c;transform:scaleX(0.9423);">Unix (LF)</div>
<div class="t" style="left:1659.80px;top:1464.64px;font-size:30px;line-height:33.52px;color:#3c3c3c;transform:scaleX(0.9015);">UTF-8</div>
<div class="t" style="left:1886.80px;top:1464.64px;font-size:30px;line-height:33.52px;color:#3c3c3c;transform:scaleX(0.9485);">Line 41, Col 1, Pos 1192</div>
<div class="t" style="left:2318.94px;top:1464.64px;font-size:30px;line-height:33.52px;color:#3c3c3c;transform:scaleX(1.0313);">Insert</div>
<div class="t" style="left:2599.38px;top:1464.64px;font-size:30px;line-height:33.52px;color:#3c3c3c;transform:scaleX(1.0114);">Read/Wri...</div>
<div class="t" style="left:2765.92px;top:1464.64px;font-size:30px;line-height:33.52px;color:#3c3c3c;transform:scaleX(1.0765);">default</div>
<div class="r" style="left:56px;top:354px;width:416px;height:1080px;overflow:hidden;"><svg class="r" style="left:297px;top:0px" width="14" height="22" viewBox="0 0 14 22"><path d="M0.8 1L9.8 11L0.8 21" fill="none" stroke="#404040" stroke-width="2.1"/></svg>
<svg class="r" style="left:339px;top:2px" width="13" height="16" viewBox="0 0 13 16"><rect x="0" y="0" width="13" height="16" fill="#efeff7"/><rect x="0" y="0" width="13" height="1.5" fill="#c8c8dc"/><rect x="0" y="0" width="1.5" height="16" fill="#c8c8dc"/><rect x="2.5" y="10.5" width="4" height="2" fill="#e0a800"/><path d="M8.5 14.5L8.5 11.5M9 11L11.5 9" stroke="#444" stroke-width="1.6"/></svg>
<svg class="r" style="left:297px;top:46px" width="14" height="22" viewBox="0 0 14 22"><path d="M0.8 1L9.8 11L0.8 21" fill="none" stroke="#404040" stroke-width="2.1"/></svg>
<svg class="r" style="left:339px;top:48px" width="13" height="16" viewBox="0 0 13 16"><rect x="0" y="0" width="13" height="16" fill="#efeff7"/><rect x="0" y="0" width="13" height="1.5" fill="#c8c8dc"/><rect x="0" y="0" width="1.5" height="16" fill="#c8c8dc"/><rect x="2.5" y="10.5" width="4" height="2" fill="#e0a800"/><path d="M8.5 14.5L8.5 11.5M9 11L11.5 9" stroke="#444" stroke-width="1.6"/></svg>
<svg class="r" style="left:297px;top:92px" width="14" height="22" viewBox="0 0 14 22"><path d="M0.8 1L9.8 11L0.8 21" fill="none" stroke="#404040" stroke-width="2.1"/></svg>
<svg class="r" style="left:339px;top:94px" width="13" height="16" viewBox="0 0 13 16"><rect x="0" y="0" width="13" height="16" fill="#efeff7"/><rect x="0" y="0" width="13" height="1.5" fill="#c8c8dc"/><rect x="0" y="0" width="1.5" height="16" fill="#c8c8dc"/><rect x="2.5" y="10.5" width="4" height="2" fill="#e0a800"/><path d="M8.5 14.5L8.5 11.5M9 11L11.5 9" stroke="#444" stroke-width="1.6"/></svg>
<svg class="r" style="left:297px;top:138px" width="14" height="22" viewBox="0 0 14 22"><path d="M0.8 1L9.8 11L0.8 21" fill="none" stroke="#404040" stroke-width="2.1"/></svg>
<svg class="r" style="left:339px;top:140px" width="13" height="16" viewBox="0 0 13 16"><rect x="0" y="0" width="13" height="16" fill="#efeff7"/><rect x="0" y="0" width="13" height="1.5" fill="#c8c8dc"/><rect x="0" y="0" width="1.5" height="16" fill="#c8c8dc"/><rect x="2.5" y="10.5" width="4" height="2" fill="#e0a800"/><path d="M8.5 14.5L8.5 11.5M9 11L11.5 9" stroke="#444" stroke-width="1.6"/></svg>
<svg class="r" style="left:297px;top:184px" width="14" height="22" viewBox="0 0 14 22"><path d="M0.8 1L9.8 11L0.8 21" fill="none" stroke="#404040" stroke-width="2.1"/></svg>
<svg class="r" style="left:339px;top:186px" width="13" height="16" viewBox="0 0 13 16"><rect x="0" y="0" width="13" height="16" fill="#efeff7"/><rect x="0" y="0" width="13" height="1.5" fill="#c8c8dc"/><rect x="0" y="0" width="1.5" height="16" fill="#c8c8dc"/><rect x="2.5" y="10.5" width="4" height="2" fill="#e0a800"/><path d="M8.5 14.5L8.5 11.5M9 11L11.5 9" stroke="#444" stroke-width="1.6"/></svg>
<svg class="r" style="left:297px;top:230px" width="14" height="22" viewBox="0 0 14 22"><path d="M0.8 1L9.8 11L0.8 21" fill="none" stroke="#404040" stroke-width="2.1"/></svg>
<svg class="r" style="left:339px;top:232px" width="13" height="16" viewBox="0 0 13 16"><rect x="0" y="0" width="13" height="16" fill="#efeff7"/><rect x="0" y="0" width="13" height="1.5" fill="#c8c8dc"/><rect x="0" y="0" width="1.5" height="16" fill="#c8c8dc"/><rect x="2.5" y="10.5" width="4" height="2" fill="#e0a800"/><path d="M8.5 14.5L8.5 11.5M9 11L11.5 9" stroke="#444" stroke-width="1.6"/></svg>
<svg class="r" style="left:297px;top:276px" width="14" height="22" viewBox="0 0 14 22"><path d="M0.8 1L9.8 11L0.8 21" fill="none" stroke="#404040" stroke-width="2.1"/></svg>
<svg class="r" style="left:339px;top:278px" width="13" height="16" viewBox="0 0 13 16"><rect x="0" y="0" width="13" height="16" fill="#efeff7"/><rect x="0" y="0" width="13" height="1.5" fill="#c8c8dc"/><rect x="0" y="0" width="1.5" height="16" fill="#c8c8dc"/><rect x="2.5" y="10.5" width="4" height="2" fill="#e0a800"/><path d="M8.5 14.5L8.5 11.5M9 11L11.5 9" stroke="#444" stroke-width="1.6"/></svg>
<svg class="r" style="left:297px;top:322px" width="14" height="22" viewBox="0 0 14 22"><path d="M0.8 1L9.8 11L0.8 21" fill="none" stroke="#404040" stroke-width="2.1"/></svg>
<svg class="r" style="left:339px;top:324px" width="13" height="16" viewBox="0 0 13 16"><rect x="0" y="0" width="13" height="16" fill="#efeff7"/><rect x="0" y="0" width="13" height="1.5" fill="#c8c8dc"/><rect x="0" y="0" width="1.5" height="16" fill="#c8c8dc"/><rect x="2.5" y="10.5" width="4" height="2" fill="#e0a800"/><path d="M8.5 14.5L8.5 11.5M9 11L11.5 9" stroke="#444" stroke-width="1.6"/></svg>
<svg class="r" style="left:297px;top:368px" width="14" height="22" viewBox="0 0 14 22"><path d="M0.8 1L9.8 11L0.8 21" fill="none" stroke="#404040" stroke-width="2.1"/></svg>
<svg class="r" style="left:339px;top:370px" width="13" height="16" viewBox="0 0 13 16"><rect x="0" y="0" width="13" height="16" fill="#efeff7"/><rect x="0" y="0" width="13" height="1.5" fill="#c8c8dc"/><rect x="0" y="0" width="1.5" height="16" fill="#c8c8dc"/><rect x="2.5" y="10.5" width="4" height="2" fill="#e0a800"/><path d="M8.5 14.5L8.5 11.5M9 11L11.5 9" stroke="#444" stroke-width="1.6"/></svg>
<svg class="r" style="left:297px;top:414px" width="14" height="22" viewBox="0 0 14 22"><path d="M0.8 1L9.8 11L0.8 21" fill="none" stroke="#404040" stroke-width="2.1"/></svg>
<svg class="r" style="left:339px;top:416px" width="13" height="16" viewBox="0 0 13 16"><rect x="0" y="0" width="13" height="16" fill="#efeff7"/><rect x="0" y="0" width="13" height="1.5" fill="#c8c8dc"/><rect x="0" y="0" width="1.5" height="16" fill="#c8c8dc"/><rect x="2.5" y="10.5" width="4" height="2" fill="#e0a800"/><path d="M8.5 14.5L8.5 11.5M9 11L11.5 9" stroke="#444" stroke-width="1.6"/></svg>
<svg class="r" style="left:290px;top:465px" width="22" height="14" viewBox="0 0 22 14"><path d="M1 2L11 11L21 2" fill="none" stroke="#404040" stroke-width="2.2"/></svg>
<svg class="r" style="left:339px;top:462px" width="13" height="16" viewBox="0 0 13 16"><rect x="0" y="0" width="13" height="16" fill="#efeff7"/><rect x="0" y="0" width="13" height="1.5" fill="#c8c8dc"/><rect x="0" y="0" width="1.5" height="16" fill="#c8c8dc"/><rect x="2.5" y="10.5" width="4" height="2" fill="#e0a800"/><path d="M8.5 14.5L8.5 11.5M9 11L11.5 9" stroke="#444" stroke-width="1.6"/></svg>
<svg class="r" style="left:369.5px;top:508px" width="13" height="16" viewBox="0 0 13 16"><rect x="0" y="0" width="13" height="16" fill="#efeff7"/><rect x="0" y="0" width="13" height="1.5" fill="#c8c8dc"/><rect x="0" y="0" width="1.5" height="16" fill="#c8c8dc"/></svg>
<svg class="r" style="left:369.5px;top:554px" width="13" height="16" viewBox="0 0 13 16"><rect x="0" y="0" width="13" height="16" fill="#efeff7"/><rect x="0" y="0" width="13" height="1.5" fill="#c8c8dc"/><rect x="0" y="0" width="1.5" height="16" fill="#c8c8dc"/></svg>
<svg class="r" style="left:369.5px;top:600px" width="13" height="16" viewBox="0 0 13 16"><rect x="0" y="0" width="13" height="16" fill="#efeff7"/><rect x="0" y="0" width="13" height="1.5" fill="#c8c8dc"/><rect x="0" y="0" width="1.5" height="16" fill="#c8c8dc"/></svg>
<svg class="r" style="left:369.5px;top:646px" width="13" height="16" viewBox="0 0 13 16"><rect x="0" y="0" width="13" height="16" fill="#efeff7"/><rect x="0" y="0" width="13" height="1.5" fill="#c8c8dc"/><rect x="0" y="0" width="1.5" height="16" fill="#c8c8dc"/></svg>
<svg class="r" style="left:369.5px;top:692px" width="13" height="16" viewBox="0 0 13 16"><rect x="0" y="0" width="13" height="16" fill="#efeff7"/><rect x="0" y="0" width="13" height="1.5" fill="#c8c8dc"/><rect x="0" y="0" width="1.5" height="16" fill="#c8c8dc"/></svg>
<svg class="r" style="left:369.5px;top:738px" width="13" height="16" viewBox="0 0 13 16"><rect x="0" y="0" width="13" height="16" fill="#efeff7"/><rect x="0" y="0" width="13" height="1.5" fill="#c8c8dc"/><rect x="0" y="0" width="1.5" height="16" fill="#c8c8dc"/></svg>
<svg class="r" style="left:369.5px;top:784px" width="13" height="16" viewBox="0 0 13 16"><rect x="0" y="0" width="13" height="16" fill="#efeff7"/><rect x="0" y="0" width="13" height="1.5" fill="#c8c8dc"/><rect x="0" y="0" width="1.5" height="16" fill="#c8c8dc"/></svg>
<svg class="r" style="left:369.5px;top:830px" width="13" height="16" viewBox="0 0 13 16"><rect x="0" y="0" width="13" height="16" fill="#efeff7"/><rect x="0" y="0" width="13" height="1.5" fill="#c8c8dc"/><rect x="0" y="0" width="1.5" height="16" fill="#c8c8dc"/></svg>
<svg class="r" style="left:297px;top:874px" width="14" height="22" viewBox="0 0 14 22"><path d="M0.8 1L9.8 11L0.8 21" fill="none" stroke="#404040" stroke-width="2.1"/></svg>
<svg class="r" style="left:339px;top:876px" width="13" height="16" viewBox="0 0 13 16"><rect x="0" y="0" width="13" height="16" fill="#efeff7"/><rect x="0" y="0" width="13" height="1.5" fill="#c8c8dc"/><rect x="0" y="0" width="1.5" height="16" fill="#c8c8dc"/><rect x="2.5" y="10.5" width="4" height="2" fill="#e0a800"/><path d="M8.5 14.5L8.5 11.5M9 11L11.5 9" stroke="#444" stroke-width="1.6"/></svg>
<svg class="r" style="left:297px;top:920px" width="14" height="22" viewBox="0 0 14 22"><path d="M0.8 1L9.8 11L0.8 21" fill="none" stroke="#404040" stroke-width="2.1"/></svg>
<svg class="r" style="left:339px;top:922px" width="13" height="16" viewBox="0 0 13 16"><rect x="0" y="0" width="13" height="16" fill="#efeff7"/><rect x="0" y="0" width="13" height="1.5" fill="#c8c8dc"/><rect x="0" y="0" width="1.5" height="16" fill="#c8c8dc"/><rect x="2.5" y="10.5" width="4" height="2" fill="#e0a800"/><path d="M8.5 14.5L8.5 11.5M9 11L11.5 9" stroke="#444" stroke-width="1.6"/></svg>
<svg class="r" style="left:297px;top:966px" width="14" height="22" viewBox="0 0 14 22"><path d="M0.8 1L9.8 11L0.8 21" fill="none" stroke="#404040" stroke-width="2.1"/></svg>
<svg class="r" style="left:339px;top:968px" width="13" height="16" viewBox="0 0 13 16"><rect x="0" y="0" width="13" height="16" fill="#efeff7"/><rect x="0" y="0" width="13" height="1.5" fill="#c8c8dc"/><rect x="0" y="0" width="1.5" height="16" fill="#c8c8dc"/><rect x="2.5" y="10.5" width="4" height="2" fill="#e0a800"/><path d="M8.5 14.5L8.5 11.5M9 11L11.5 9" stroke="#444" stroke-width="1.6"/></svg>
<svg class="r" style="left:267px;top:1012px" width="14" height="22" viewBox="0 0 14 22"><path d="M0.8 1L9.8 11L0.8 21" fill="none" stroke="#404040" stroke-width="2.1"/></svg>
<svg class="r" style="left:309px;top:1014px" width="13" height="16" viewBox="0 0 13 16"><rect x="0" y="0" width="13" height="16" fill="#efeff7"/><rect x="0" y="0" width="13" height="1.5" fill="#c8c8dc"/><rect x="0" y="0" width="1.5" height="16" fill="#c8c8dc"/><rect x="2.5" y="10.5" width="4" height="2" fill="#e0a800"/><path d="M8.5 14.5L8.5 11.5M9 11L11.5 9" stroke="#444" stroke-width="1.6"/></svg>
<svg class="r" style="left:267px;top:1058px" width="14" height="22" viewBox="0 0 14 22"><path d="M0.8 1L9.8 11L0.8 21" fill="none" stroke="#404040" stroke-width="2.1"/></svg>
<svg class="r" style="left:309px;top:1060px" width="13" height="16" viewBox="0 0 13 16"><rect x="0" y="0" width="13" height="16" fill="#efeff7"/><rect x="0" y="0" width="13" height="1.5" fill="#c8c8dc"/><rect x="0" y="0" width="1.5" height="16" fill="#c8c8dc"/><rect x="2.5" y="10.5" width="4" height="2" fill="#e0a800"/><path d="M8.5 14.5L8.5 11.5M9 11L11.5 9" stroke="#444" stroke-width="1.6"/></svg>
<div class="r" style="left:384px;top:540.6px;width:32px;height:44.39999999999998px;background:#e8e8e8;"></div>
<div class="t" style="left:360.13px;top:-4.02px;font-size:29.4px;line-height:32.85px;color:#000;transform:scaleX(1.0700);">error-model</div>
<div class="t" style="left:360.13px;top:41.98px;font-size:29.4px;line-height:32.85px;color:#000;transform:scaleX(1.0700);">ipv6</div>
<div class="t" style="left:360.13px;top:87.98px;font-size:29.4px;line-height:32.85px;color:#000;transform:scaleX(1.0700);">matrix-topology</div>
<div class="t" style="left:360.13px;top:133.98px;font-size:29.4px;line-height:32.85px;color:#000;transform:scaleX(1.0700);">naming</div>
<div class="t" style="left:360.13px;top:179.98px;font-size:29.4px;line-height:32.85px;color:#000;transform:scaleX(1.0700);">realtime</div>
<div class="t" style="left:360.13px;top:225.98px;font-size:29.4px;line-height:32.85px;color:#000;transform:scaleX(1.0700);">routing</div>
<div class="t" style="left:361.20px;top:271.98px;font-size:29.4px;line-height:32.85px;color:#000;transform:scaleX(1.0700);">socket</div>
<div class="t" style="left:361.20px;top:317.98px;font-size:29.4px;line-height:32.85px;color:#000;transform:scaleX(1.0700);">stats</div>
<div class="t" style="left:361.20px;top:363.98px;font-size:29.4px;line-height:32.85px;color:#000;transform:scaleX(1.0700);">tcp</div>
<div class="t" style="left:361.20px;top:409.98px;font-size:29.4px;line-height:32.85px;color:#000;transform:scaleX(1.0700);">traffic-control</div>
<div class="t" style="left:361.20px;top:455.98px;font-size:29.4px;line-height:32.85px;color:#000;transform:scaleX(1.0700);">tutorial</div>
<div class="t" style="left:391.00px;top:501.98px;font-size:29.4px;line-height:32.85px;color:#000;transform:scaleX(1.0700);">fifth.cc</div>
<div class="t" style="left:391.00px;top:547.98px;font-size:29.4px;line-height:32.85px;color:#000;transform:scaleX(1.0700);">first.cc</div>
<div class="t" style="left:391.00px;top:593.98px;font-size:29.4px;line-height:32.85px;color:#000;transform:scaleX(1.0700);">fourth.cc</div>
<div class="t" style="left:388.86px;top:639.98px;font-size:29.4px;line-height:32.85px;color:#000;transform:scaleX(1.0700);">hello-simulator.cc</div>
<div class="t" style="left:391.00px;top:685.98px;font-size:29.4px;line-height:32.85px;color:#000;transform:scaleX(1.0700);">second.cc</div>
<div class="t" style="left:391.00px;top:731.98px;font-size:29.4px;line-height:32.85px;color:#000;transform:scaleX(1.0700);">seventh.cc</div>
<div class="t" style="left:391.00px;top:777.98px;font-size:29.4px;line-height:32.85px;color:#000;transform:scaleX(1.0700);">sixth.cc</div>
<div class="t" style="left:391.00px;top:823.98px;font-size:29.4px;line-height:32.85px;color:#000;transform:scaleX(1.0700);">third.cc</div>
<div class="t" style="left:360.13px;top:869.98px;font-size:29.4px;line-height:32.85px;color:#000;transform:scaleX(1.0700);">udp</div>
<div class="t" style="left:360.13px;top:915.98px;font-size:29.4px;line-height:32.85px;color:#000;transform:scaleX(1.0700);">udp-client-server</div>
<div class="t" style="left:362.27px;top:961.98px;font-size:29.4px;line-height:32.85px;color:#000;transform:scaleX(1.0700);">wireless</div>
<div class="t" style="left:331.00px;top:1007.98px;font-size:29.4px;line-height:32.85px;color:#000;transform:scaleX(1.0700);">scratch</div>
<div class="t" style="left:331.00px;top:1053.98px;font-size:29.4px;line-height:32.85px;color:#000;transform:scaleX(1.0700);">src</div></div>
</body></html>
